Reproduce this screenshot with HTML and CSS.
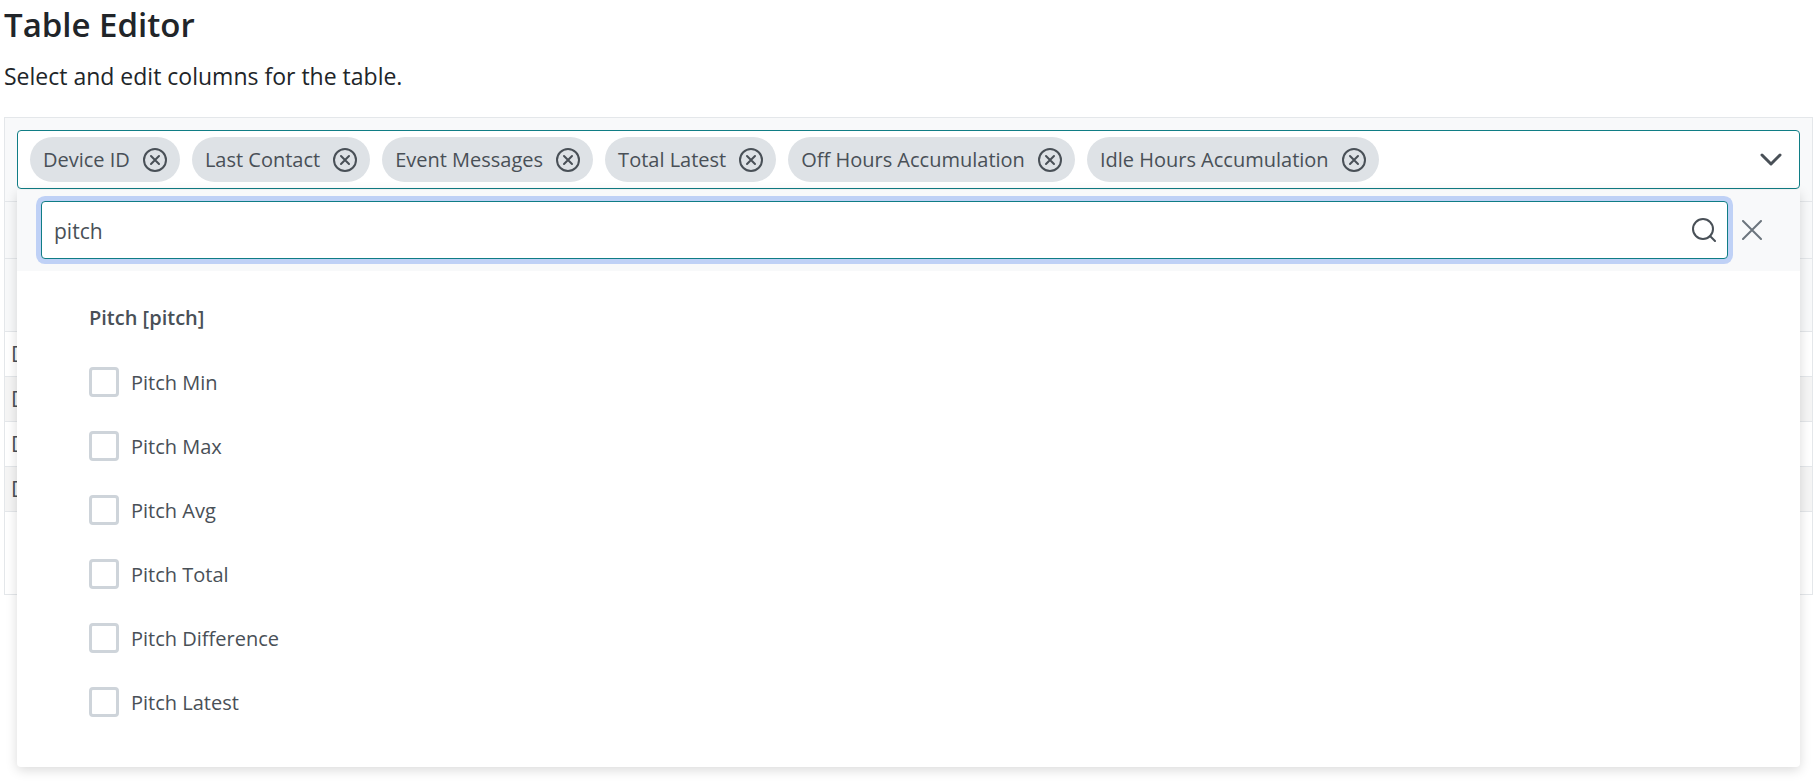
FILE: index.html
```html
<!DOCTYPE html>
<html lang="en">
<head>
    <meta charset="UTF-8">
    <meta name="viewport" content="width=device-width, initial-scale=1.0">
    <title>Table Editor</title>
    <link rel="stylesheet" href="styles.css">
</head>
<body>
    <svg width="0" height="0" class="sprite" aria-hidden="true">
        <symbol id="icon-remove" viewBox="0 0 24 24">
            <circle cx="12" cy="12" r="11"/>
            <path d="M8 8l8 8M16 8l-8 8"/>
        </symbol>
    </svg>

    <h1>Table Editor</h1>
    <p class="intro">Select and edit columns for the table.</p>

    <div class="editor">
        <div class="toolbar">
            <div class="multiselect">
                <ul class="chips">
                    <li class="chip">Device ID <button type="button" aria-label="Remove Device ID"><svg><use href="#icon-remove"/></svg></button></li>
                    <li class="chip">Last Contact <button type="button" aria-label="Remove Last Contact"><svg><use href="#icon-remove"/></svg></button></li>
                    <li class="chip">Event Messages <button type="button" aria-label="Remove Event Messages"><svg><use href="#icon-remove"/></svg></button></li>
                    <li class="chip">Total Latest <button type="button" aria-label="Remove Total Latest"><svg><use href="#icon-remove"/></svg></button></li>
                    <li class="chip">Off Hours Accumulation <button type="button" aria-label="Remove Off Hours Accumulation"><svg><use href="#icon-remove"/></svg></button></li>
                    <li class="chip">Idle Hours Accumulation <button type="button" aria-label="Remove Idle Hours Accumulation"><svg><use href="#icon-remove"/></svg></button></li>
                </ul>
                <button type="button" class="trigger" aria-label="Toggle columns" aria-expanded="true">
                    <svg viewBox="0 0 24 24"><path d="M3 7l9 9 9-9"/></svg>
                </button>
            </div>

            <div class="panel">
                <div class="panel-header">
                    <div class="search">
                        <input type="text" value="pitch" aria-label="Search columns">
                        <svg viewBox="0 0 24 24"><circle cx="11" cy="11" r="10"/><path d="M18 18l5 5"/></svg>
                    </div>
                    <button type="button" class="close" aria-label="Close">
                        <svg viewBox="0 0 20 20"><path d="M1 1l18 18M19 1L1 19"/></svg>
                    </button>
                </div>
                <div class="options">
                    <h2>Pitch [pitch]</h2>
                    <label><input type="checkbox"> Pitch Min</label>
                    <label><input type="checkbox"> Pitch Max</label>
                    <label><input type="checkbox"> Pitch Avg</label>
                    <label><input type="checkbox"> Pitch Total</label>
                    <label><input type="checkbox"> Pitch Difference</label>
                    <label><input type="checkbox"> Pitch Latest</label>
                </div>
            </div>
        </div>

        <table>
            <thead>
                <tr class="groups"><th></th></tr>
                <tr class="columns"><th></th></tr>
            </thead>
            <tbody>
                <tr><td>D</td></tr>
                <tr><td>D</td></tr>
                <tr><td>D</td></tr>
                <tr><td>D</td></tr>
            </tbody>
        </table>
        <div class="paginator"></div>
    </div>
</body>
</html>
```

FILE: styles.css
```css
* {
    box-sizing: border-box;
}
body {
    margin: 0;
    min-height: 100vh;
    padding: 0 6px 0 4px;
    font-family: "Open Sans", "Noto Sans", sans-serif;
    font-size: 21px;
    color: #495057;
    background-color: #fff;
}
button {
    padding: 0;
    border: none;
    background: none;
    color: inherit;
    cursor: pointer;
}
svg {
    display: block;
    fill: none;
    stroke: currentColor;
    stroke-width: 2;
    stroke-linecap: round;
    stroke-linejoin: round;
}
.sprite {
    position: absolute;
}
h1 {
    margin: 0;
    padding-top: 3px;
    font-size: 33px;
    font-weight: 600;
    line-height: 44px;
    color: #212529;
}
.intro {
    margin: 13px 0 24px;
    font-size: 23px;
    line-height: 33px;
    color: #212529;
}
.editor {
    border: 1px solid #e4e7ea;
}
.toolbar {
    position: relative;
    padding: 12px;
    background-color: #f8f9fa;
}

/* selected columns */
.multiselect {
    display: flex;
    align-items: center;
    justify-content: space-between;
    padding: 6px 16px 6px 12px;
    border: 1px solid #107d85;
    border-radius: 4px;
    background-color: #fff;
}
.chips {
    display: flex;
    gap: 12px;
    margin: 0;
    padding: 0;
    list-style: none;
}
.chip {
    display: flex;
    align-items: center;
    gap: 13px;
    height: 45px;
    padding: 0 13px;
    border-radius: 23px;
    background-color: #dee2e6;
    font-size: 20px;
    white-space: nowrap;
}
.chip svg {
    width: 24px;
    height: 24px;
}
.trigger svg {
    width: 24px;
    height: 24px;
    stroke-width: 3;
}

/* dropdown panel */
.panel {
    position: absolute;
    top: 72px;
    left: 12px;
    right: 12px;
    z-index: 1;
    border-radius: 4px;
    background-color: #fff;
    box-shadow: 0 3px 12px rgba(0, 0, 0, 0.15);
}
.panel-header {
    display: flex;
    align-items: center;
    gap: 14px;
    padding: 11px 38px 12px 24px;
    background-color: #f8f9fa;
}
.search {
    position: relative;
    flex: 1;
}
.search input {
    display: block;
    width: 100%;
    height: 58px;
    padding: 1px 48px 0 12px;
    border: 1px solid #107d85;
    border-radius: 4px;
    outline: none;
    background-color: #fff;
    box-shadow: 0 0 0 5px #bfd1f6;
    color: inherit;
    font: inherit;
}
.search svg {
    position: absolute;
    top: 17px;
    right: 12px;
    width: 24px;
    height: 24px;
}
.close {
    color: #6c757d;
}
.close svg {
    width: 20px;
    height: 20px;
}
.options {
    padding: 29px 72px 33px;
}
.options h2 {
    margin: 0;
    font-size: 20px;
    font-weight: 600;
    line-height: 36px;
    padding-bottom: 14px;
}
.options label {
    display: flex;
    align-items: center;
    gap: 12px;
    height: 64px;
    font-size: 20px;
}
.options input {
    width: 30px;
    height: 30px;
    margin: 0;
    border: 3px solid #ced4da;
    border-radius: 4px;
    background-color: #fff;
    appearance: none;
}

/* table behind the panel */
table {
    width: 100%;
    border-collapse: collapse;
}
th {
    border-top: 1px solid #e4e7ea;
    background-color: #f8f9fa;
}
td {
    padding: 0 6px;
    border-top: 1px solid #e4e7ea;
    line-height: 44px;
}
.groups th {
    height: 57px;
}
.columns th {
    height: 73px;
}
tbody tr:nth-child(even) {
    background-color: #f5f5f5;
}
.paginator {
    height: 83px;
    border-top: 1px solid #e4e7ea;
}
```
